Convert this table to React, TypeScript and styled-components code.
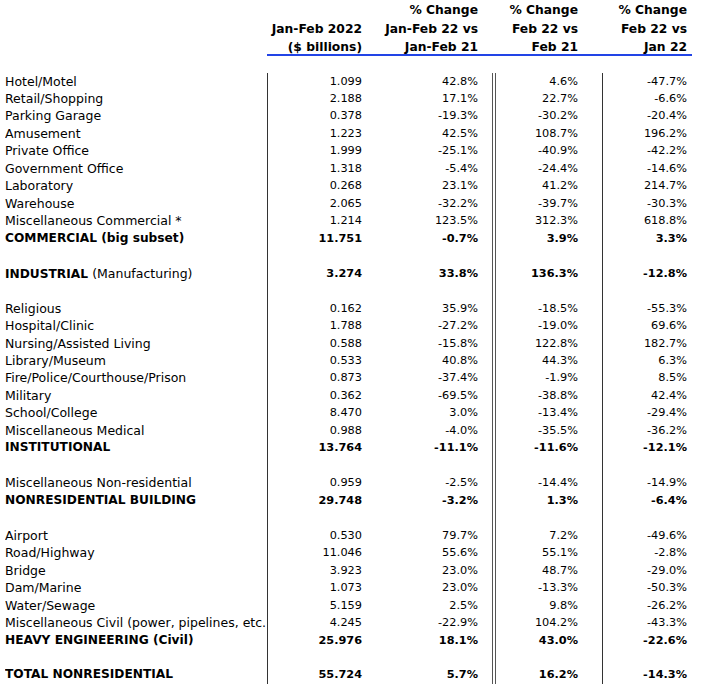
import React from "react";
import styled, { createGlobalStyle } from "styled-components";

const Global = createGlobalStyle`
  html, body { margin: 0; padding: 0; background: #fff; }
  body { font-family: "DejaVu Sans", "Liberation Sans", sans-serif; color: #000; }
`;

const Page = styled.div`
  width: 701px;
  height: 684px;
  overflow: hidden;
  padding-left: 5px;
  box-sizing: border-box;
`;

const cols = "262px 95px 131px 3px 106px 90px";

const Header = styled.div`
  display: grid;
  grid-template-columns: ${cols};
  padding-top: 1px;
`;

const HeadCell = styled.div<{ $pad: number }>`
  font-weight: bold;
  font-size: 12.3px;
  line-height: 18.5px;
  text-align: right;
  padding-right: ${(p) => p.$pad}px;
  display: flex;
  flex-direction: column;
  justify-content: flex-end;
  white-space: nowrap;
`;

const Rule = styled.div`
  margin-left: 262px;
  width: 425px;
  height: 2px;
  background: #2244e6;
  margin-top: -3px;
`;

const Body = styled.div`
  display: grid;
  grid-template-columns: ${cols};
  grid-auto-rows: 17.47px;
  margin-top: 17px;
`;

const Label = styled.div<{ $bold?: boolean }>`
  font-size: ${(p) => (p.$bold ? "12.2px" : "12.5px")};
  line-height: 17.47px;
  font-weight: ${(p) => (p.$bold ? "bold" : "normal")};
  white-space: nowrap;
  overflow: hidden;
`;

const Num = styled.div<{ $bold?: boolean; $pad: number; $line?: boolean }>`
  font-size: 11.3px;
  line-height: 17.47px;
  font-weight: ${(p) => (p.$bold ? "bold" : "normal")};
  text-align: right;
  padding-right: ${(p) => p.$pad}px;
  border-left: ${(p) => (p.$line ? "1px solid #333" : "none")};
  white-space: nowrap;
`;

const Double = styled.div`
  border-left: 1px solid #555;
  border-right: 1px solid #555;
  box-sizing: border-box;
  margin-left: -1px;
  width: 4px;
`;

const Thin = styled.span`
  font-weight: normal;
  font-size: 12.5px;
`;

type Row = { l: React.ReactNode; v?: string[]; b?: boolean };

const rows: Row[] = [
  { l: "Hotel/Motel", v: ["1.099", "42.8%", "4.6%", "-47.7%"] },
  { l: "Retail/Shopping", v: ["2.188", "17.1%", "22.7%", "-6.6%"] },
  { l: "Parking Garage", v: ["0.378", "-19.3%", "-30.2%", "-20.4%"] },
  { l: "Amusement", v: ["1.223", "42.5%", "108.7%", "196.2%"] },
  { l: "Private Office", v: ["1.999", "-25.1%", "-40.9%", "-42.2%"] },
  { l: "Government Office", v: ["1.318", "-5.4%", "-24.4%", "-14.6%"] },
  { l: "Laboratory", v: ["0.268", "23.1%", "41.2%", "214.7%"] },
  { l: "Warehouse", v: ["2.065", "-32.2%", "-39.7%", "-30.3%"] },
  { l: "Miscellaneous Commercial *", v: ["1.214", "123.5%", "312.3%", "618.8%"] },
  { l: "COMMERCIAL (big subset)", v: ["11.751", "-0.7%", "3.9%", "3.3%"], b: true },
  { l: "" },
  {
    l: (
      <>
        INDUSTRIAL <Thin>(Manufacturing)</Thin>
      </>
    ),
    v: ["3.274", "33.8%", "136.3%", "-12.8%"],
    b: true,
  },
  { l: "" },
  { l: "Religious", v: ["0.162", "35.9%", "-18.5%", "-55.3%"] },
  { l: "Hospital/Clinic", v: ["1.788", "-27.2%", "-19.0%", "69.6%"] },
  { l: "Nursing/Assisted Living", v: ["0.588", "-15.8%", "122.8%", "182.7%"] },
  { l: "Library/Museum", v: ["0.533", "40.8%", "44.3%", "6.3%"] },
  { l: "Fire/Police/Courthouse/Prison", v: ["0.873", "-37.4%", "-1.9%", "8.5%"] },
  { l: "Military", v: ["0.362", "-69.5%", "-38.8%", "42.4%"] },
  { l: "School/College", v: ["8.470", "3.0%", "-13.4%", "-29.4%"] },
  { l: "Miscellaneous Medical", v: ["0.988", "-4.0%", "-35.5%", "-36.2%"] },
  { l: "INSTITUTIONAL", v: ["13.764", "-11.1%", "-11.6%", "-12.1%"], b: true },
  { l: "" },
  { l: "Miscellaneous Non-residential", v: ["0.959", "-2.5%", "-14.4%", "-14.9%"] },
  { l: "NONRESIDENTIAL BUILDING", v: ["29.748", "-3.2%", "1.3%", "-6.4%"], b: true },
  { l: "" },
  { l: "Airport", v: ["0.530", "79.7%", "7.2%", "-49.6%"] },
  { l: "Road/Highway", v: ["11.046", "55.6%", "55.1%", "-2.8%"] },
  { l: "Bridge", v: ["3.923", "23.0%", "48.7%", "-29.0%"] },
  { l: "Dam/Marine", v: ["1.073", "23.0%", "-13.3%", "-50.3%"] },
  { l: "Water/Sewage", v: ["5.159", "2.5%", "9.8%", "-26.2%"] },
  { l: "Miscellaneous Civil (power, pipelines, etc.", v: ["4.245", "-22.9%", "104.2%", "-43.3%"] },
  { l: "HEAVY ENGINEERING (Civil)", v: ["25.976", "18.1%", "43.0%", "-22.6%"], b: true },
  { l: "" },
  { l: "TOTAL NONRESIDENTIAL", v: ["55.724", "5.7%", "16.2%", "-14.3%"], b: true },
];

export default function App() {
  return (
    <Page>
      <Global />
      <Header>
        <div />
        <HeadCell $pad={0}>
          <span>Jan-Feb 2022</span>
          <span>($ billions)</span>
        </HeadCell>
        <HeadCell $pad={15}>
          <span>% Change</span>
          <span>Jan-Feb 22 vs</span>
          <span>Jan-Feb 21</span>
        </HeadCell>
        <div />
        <HeadCell $pad={24}>
          <span>% Change</span>
          <span>Feb 22 vs</span>
          <span>Feb 21</span>
        </HeadCell>
        <HeadCell $pad={5}>
          <span>% Change</span>
          <span>Feb 22 vs</span>
          <span>Jan 22</span>
        </HeadCell>
      </Header>
      <Rule />
      <Body>
        {rows.map((r, i) => (
          <React.Fragment key={i}>
            <Label $bold={r.b}>{r.l}</Label>
            <Num $bold={r.b} $pad={0} $line>
              {r.v?.[0]}
            </Num>
            <Num $bold={r.b} $pad={15}>
              {r.v?.[1]}
            </Num>
            <Double />
            <Num $bold={r.b} $pad={24}>
              {r.v?.[2]}
            </Num>
            <Num $bold={r.b} $pad={5} $line>
              {r.v?.[3]}
            </Num>
          </React.Fragment>
        ))}
      </Body>
    </Page>
  );
}
